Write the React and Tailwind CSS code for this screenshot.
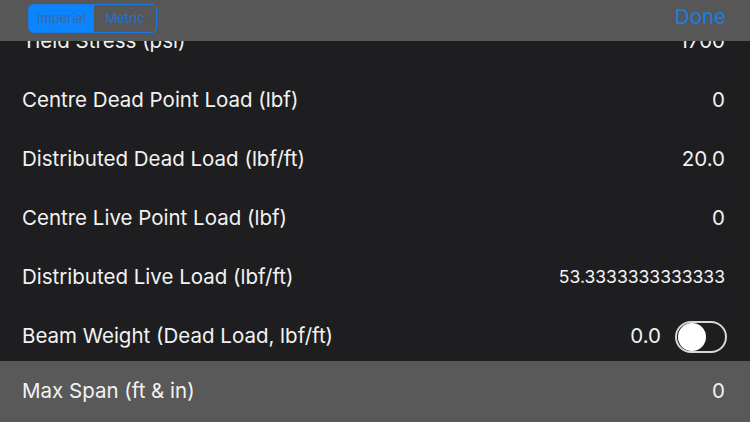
import React from 'react';

const rows = [
  { label: 'Yield Stress (psi)', value: '1700' },
  { label: 'Centre Dead Point Load (lbf)', value: '0' },
  { label: 'Distributed Dead Load (lbf/ft)', value: '20.0' },
  { label: 'Centre Live Point Load (lbf)', value: '0' },
  { label: 'Distributed Live Load (lbf/ft)', value: '53.3333333333333', small: true },
];

const Toggle = () => (
  <div className="w-[52px] h-[32px] rounded-full border-2 border-[#d8d8d8] flex items-center px-[1px] -mr-[2px]">
    <div className="w-[28px] h-[28px] rounded-full bg-white" />
  </div>
);

const Row = ({ label, value, small, children }) => (
  <div className="h-[59px] flex items-center justify-between pl-[22px] pr-[25px] shrink-0">
    <span className="text-[20.5px] text-[#f2f2f2]">{label}</span>
    <div className="flex items-center gap-[14px]">
      <span className={`${small ? 'text-[17.5px]' : 'text-[20.5px]'} text-[#f2f2f2]`}>{value}</span>
      {children}
    </div>
  </div>
);

export default function App() {
  return (
    <div className="w-[750px] h-[422px] flex flex-col bg-[#1e1e20] overflow-hidden" style={{ fontFamily: 'Inter, "Noto Sans", sans-serif' }}>
      <div className="h-[41px] shrink-0 bg-[#575757] flex items-start justify-between pl-[28px] pr-[24px] relative z-10">
        <div className="mt-[4px] flex h-[29px] w-[129px] rounded-[5px] border border-[#1b78e0] overflow-hidden text-[13px]">
          <div className="w-[65px] bg-[#0a84ff] text-[#3d6aa0] flex items-center justify-center">Imperial</div>
          <div className="flex-1 text-[#1d74d6] flex items-center justify-center">Metric</div>
        </div>
        <span className="mt-[3px] text-[20.5px] leading-[28px] text-[#1a7ee6]">Done</span>
      </div>
      <div className="flex-1 overflow-hidden">
        <div className="-mt-[29px] flex flex-col">
          {rows.map((r) => (
            <Row key={r.label} {...r} />
          ))}
          <Row label="Beam Weight (Dead Load, lbf/ft)" value="0.0">
            <Toggle />
          </Row>
        </div>
      </div>
      <div className="h-[61px] shrink-0 bg-[#595959] flex items-center justify-between pl-[22px] pr-[25px]">
        <span className="text-[20.5px] text-[#f2f2f2]">Max Span (ft &amp; in)</span>
        <span className="text-[20.5px] text-[#f2f2f2]">0</span>
      </div>
    </div>
  );
}
